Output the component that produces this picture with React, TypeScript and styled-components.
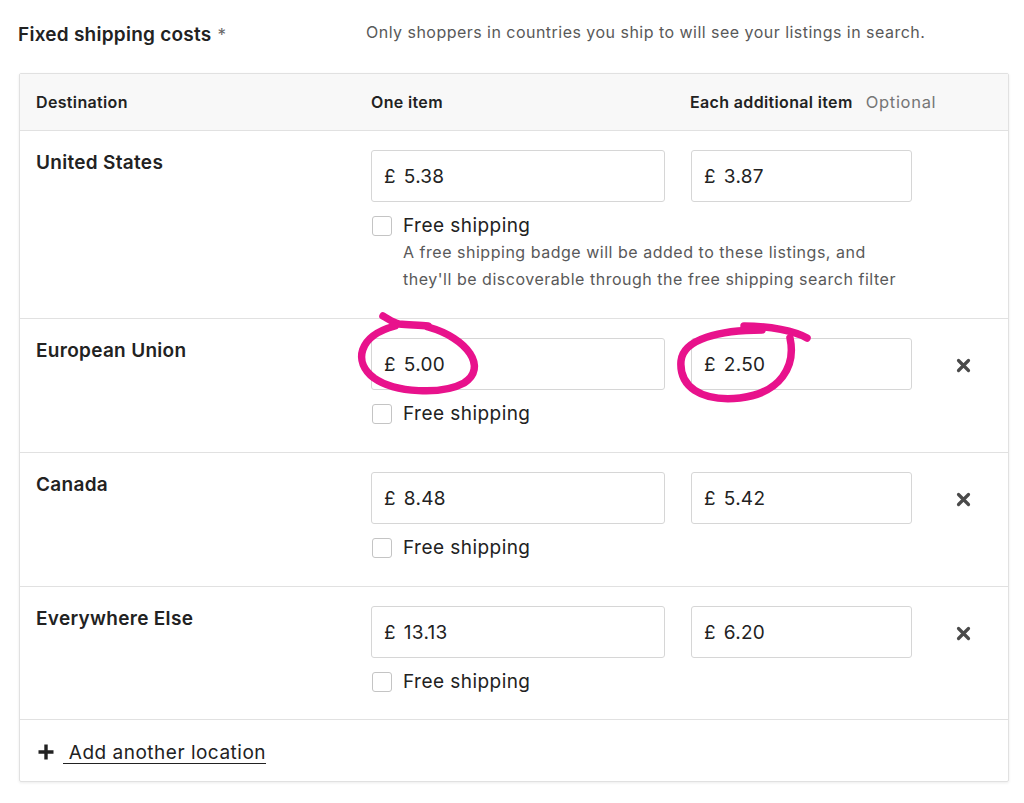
import React from "react";
import styled, { createGlobalStyle } from "styled-components";

const Global = createGlobalStyle`
  html, body { margin: 0; padding: 0; background: #fff; }
  body { font-family: Inter, "Noto Sans", "Liberation Sans", sans-serif; color: #222; }
`;

const Page = styled.div`
  position: relative;
  padding: 22px 15px 20px 19px;
  width: 990px;
`;

const TitleRow = styled.div`
  display: grid;
  grid-template-columns: 347px 1fr;
  align-items: center;
  height: 24px;
  margin-bottom: 27px;
`;

const Title = styled.div`
  font-size: 19px;
  font-weight: 600;
  margin-left: -1px;
  letter-spacing: 0.25px;
  span { font-weight: 400; color: #666; font-size: 17px; margin-left: 6px; }
`;

const Help = styled.div`
  font-size: 16px;
  color: #595959;
  margin-top: -4px;
  letter-spacing: 0.47px;
`;

const Table = styled.div`
  border: 1px solid #e1e1e1;
  border-radius: 2px;
  box-shadow: 0 1px 3px rgba(0, 0, 0, 0.08);
`;

const Grid = styled.div<{ $head?: boolean }>`
  display: grid;
  grid-template-columns: 335px 320px 220px 1fr;
  padding: ${(p) => (p.$head ? "0 0 0 16px" : "19px 0 0 16px")};
  background: ${(p) => (p.$head ? "#f8f8f8" : "#fff")};
  border-bottom: 1px solid #e1e1e1;
  align-items: ${(p) => (p.$head ? "center" : "start")};
  height: ${(p) => (p.$head ? "57px" : "auto")};
  box-sizing: border-box;
`;

const Row = styled(Grid)<{ $h: number }>`
  height: ${(p) => p.$h}px;
`;

const HeadCell = styled.div<{ $shift?: number }>`
  font-size: 16px;
  font-weight: 600;
  color: #222;
  letter-spacing: 0.35px;
  display: flex;
  align-items: baseline;
  gap: 13px;
  margin-left: ${(p) => p.$shift ?? 0}px;
`;

const Optional = styled.span`
  font-weight: 400;
  font-size: 16.5px;
  color: #757575;
  letter-spacing: 0.7px;
`;

const Name = styled.div`
  font-size: 19px;
  font-weight: 600;
  line-height: 24px;
  margin-top: 1px;
  letter-spacing: 0.3px;
`;

const Col = styled.div`
  display: flex;
  flex-direction: column;
`;

const Input = styled.div<{ $w: number }>`
  width: ${(p) => p.$w}px;
  height: 52px;
  box-sizing: border-box;
  border: 1px solid #d6d6d6;
  border-radius: 3px;
  display: flex;
  align-items: center;
  padding-left: 12px;
  font-size: 19px;
  color: #222;
  gap: 8px;
  letter-spacing: 0.25px;
`;

const CheckRow = styled.label`
  display: flex;
  align-items: center;
  gap: 11px;
  margin-top: 11px;
  font-size: 19px;
  line-height: 26px;
  color: #222;
  letter-spacing: 0.45px;
`;

const Box = styled.span`
  width: 20px;
  height: 20px;
  box-sizing: border-box;
  border: 1px solid #c4c4c4;
  border-radius: 3px;
  margin-left: 1px;
  background: #fff;
`;

const Desc = styled.div`
  margin-left: 32px;
  font-size: 16px;
  line-height: 27px;
  color: #595959;
  width: 500px;
  letter-spacing: 0.52px;
`;

const Remove = styled.button`
  margin: 20px 0 0 45px;
  width: 15px;
  height: 15px;
  padding: 0;
  border: none;
  background: none;
  color: #4a4a4a;
  display: flex;
`;

const Footer = styled.div`
  height: 61px;
  display: flex;
  align-items: center;
  padding-left: 17px;
  gap: 8px;
  padding-top: 3px;
  box-sizing: border-box;
`;

const AddLink = styled.a`
  font-size: 19px;
  color: #222;
  text-decoration: underline;
  text-underline-offset: 4px;
  text-decoration-thickness: 1px;
  white-space: pre;
  letter-spacing: 0.5px;
`;

const Scribble = styled.svg`
  position: absolute;
  left: 0;
  top: 0;
  pointer-events: none;
`;

const XIcon = () => (
  <svg width="15" height="15" viewBox="0 0 15 15">
    <path d="M2.5 2.5 L12.5 12.5 M12.5 2.5 L2.5 12.5" stroke="currentColor" strokeWidth="3.2" strokeLinecap="round" />
  </svg>
);

const PlusIcon = () => (
  <svg width="18" height="18" viewBox="0 0 18 18">
    <path d="M9 1.5 V16.5 M1.5 9 H16.5" stroke="#222" strokeWidth="3.4" strokeLinecap="butt" />
  </svg>
);

type Loc = { name: string; one: string; add: string; h: number; desc?: boolean; removable: boolean };

const rows: Loc[] = [
  { name: "United States", one: "5.38", add: "3.87", h: 188, desc: true, removable: false },
  { name: "European Union", one: "5.00", add: "2.50", h: 134, removable: true },
  { name: "Canada", one: "8.48", add: "5.42", h: 134, removable: true },
  { name: "Everywhere Else", one: "13.13", add: "6.20", h: 133, removable: true },
];

export default function App() {
  return (
    <>
      <Global />
      <Page>
        <TitleRow>
          <Title>
            Fixed shipping costs<span>*</span>
          </Title>
          <Help>Only shoppers in countries you ship to will see your listings in search.</Help>
        </TitleRow>
        <Table>
          <Grid $head>
            <HeadCell>Destination</HeadCell>
            <HeadCell>One item</HeadCell>
            <HeadCell $shift={-1} style={{ gridColumn: "3 / 5" }}>
              Each additional item <Optional>Optional</Optional>
            </HeadCell>
          </Grid>
          {rows.map((r) => (
            <Row key={r.name} $h={r.h}>
              <Name>{r.name}</Name>
              <Col>
                <Input $w={294}>
                  <span>£</span>
                  <span>{r.one}</span>
                </Input>
                <CheckRow>
                  <Box />
                  Free shipping
                </CheckRow>
                {r.desc && (
                  <Desc>
                    A free shipping badge will be added to these listings, and they'll be discoverable through the free
                    shipping search filter
                  </Desc>
                )}
              </Col>
              <Input $w={221}>
                <span>£</span>
                <span>{r.add}</span>
              </Input>
              {r.removable && (
                <Remove aria-label="Remove">
                  <XIcon />
                </Remove>
              )}
            </Row>
          ))}
          <Footer>
            <PlusIcon />
            <AddLink href="#"> Add another location</AddLink>
          </Footer>
        </Table>
        <Scribble width="1024" height="803" viewBox="0 0 1024 803">
          <g fill="none" stroke="#e8128c" strokeWidth="7.5" strokeLinecap="round" strokeLinejoin="round">
            <path d="M383 316 C390 320 394 323 399 324 C410 325 420 325 428 326" />
            <path d="M428 327 C468 338 488 368 464 383 C442 395 395 393 374 378 C353 362 358 336 395 326" />
            <path d="M744 326 C770 326 795 331 807 338" />
            <path d="M790 338 C796 366 781 393 740 398 C700 402 679 386 681 361 C683 339 720 330 762 330" />
          </g>
        </Scribble>
      </Page>
    </>
  );
}
